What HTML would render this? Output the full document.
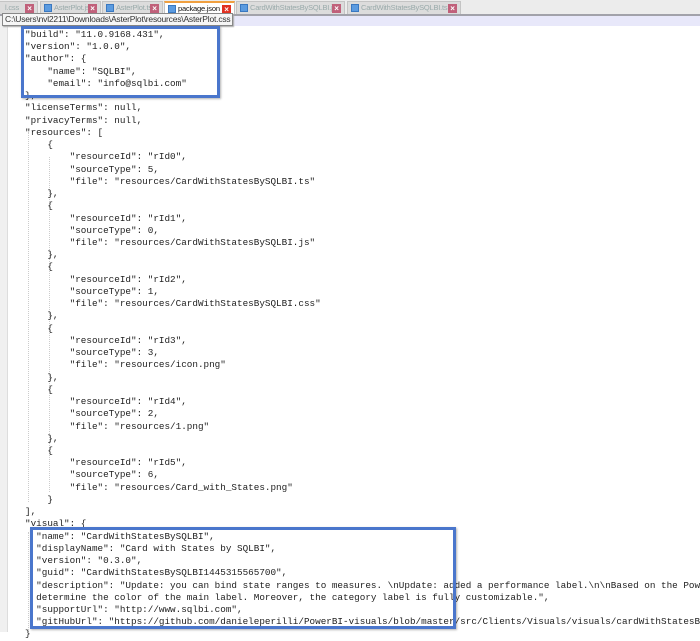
<!DOCTYPE html>
<html><head><style>
body{margin:0;width:700px;height:632px;overflow:hidden;background:#fff;position:relative;font-family:"Liberation Mono",monospace;}
.tabs{position:absolute;left:0;top:0;width:700px;height:14px;background:#ececec;border-bottom:2px solid #a2a2aa;}
.tab{position:absolute;top:1px;height:13px;background:#dcdcdc;border:1px solid #c4c4c4;border-bottom:none;font:7.5px "Liberation Sans",sans-serif;letter-spacing:-0.2px;color:#9aa;line-height:12px;box-sizing:border-box;white-space:nowrap;overflow:hidden;}
.tab .ic{position:absolute;left:3px;top:2px;width:8px;height:8px;background:#5b9be0;border:1px solid #3a78c0;box-sizing:border-box}
.tab .t{position:absolute;left:13px;top:0}
.tab .x{position:absolute;right:3px;top:2px;width:9px;height:9px;background:#c0607a;color:#fff;font-size:8px;line-height:9px;text-align:center;font-weight:bold}
.tab.a{background:#fff;border-top:2px solid #f0a040;color:#111}
.tab.a .x{background:#e03020}
.hl{position:absolute;left:8px;top:16px;width:692px;height:10px;background:#e8e8fa}
.tip{position:absolute;left:2px;top:13px;height:11px;background:#f6f6f6;border:1px solid #888;font:8.5px "Liberation Sans",sans-serif;letter-spacing:-0.2px;color:#333;line-height:11px;padding:0 2px;box-shadow:1px 1px 1px #aaa}
.gut{position:absolute;left:0;top:16px;width:7px;height:616px;background:#f0f0f0;border-right:1px solid #ddd}
.guide{position:absolute;width:0;border-left:1px dotted #ccc}
pre{position:absolute;left:25px;top:29px;width:675px;overflow:hidden;margin:0;font-size:9.3px;line-height:12.23px;color:#222;}
.box{position:absolute;border:3px solid #4a76cc;box-sizing:border-box;box-shadow:1px 1px 2px rgba(0,0,0,.3)}
</style></head><body>
<div class="tabs">
<div class="tab" style="left:-6px;width:44px"><span class="t" style="left:10px">l.css</span><span class="x">×</span></div>
<div class="tab" style="left:40px;width:61px"><span class="ic"></span><span class="t">AsterPlot.js</span><span class="x">×</span></div>
<div class="tab" style="left:102px;width:61px"><span class="ic"></span><span class="t">AsterPlot.ts</span><span class="x">×</span></div>
<div class="tab a" style="left:164px;width:71px"><span class="ic"></span><span class="t">package.json</span><span class="x">×</span></div>
<div class="tab" style="left:236px;width:109px"><span class="ic"></span><span class="t">CardWithStatesBySQLBI.js</span><span class="x">×</span></div>
<div class="tab" style="left:347px;width:114px"><span class="ic"></span><span class="t">CardWithStatesBySQLBI.ts</span><span class="x">×</span></div>
</div>
<div class="hl"></div>
<div class="gut"></div>
<div class="guide" style="left:28px;top:132px;height:370px"></div>
<div class="guide" style="left:49px;top:157px;height:335px"></div>
<div class="guide" style="left:28px;top:532px;height:100px"></div>
<pre>"build": "11.0.9168.431",
"version": "1.0.0",
"author": {
    "name": "SQLBI",
    "email": "info@sqlbi.com"
},
"licenseTerms": null,
"privacyTerms": null,
"resources": [
    {
        "resourceId": "rId0",
        "sourceType": 5,
        "file": "resources/CardWithStatesBySQLBI.ts"
    },
    {
        "resourceId": "rId1",
        "sourceType": 0,
        "file": "resources/CardWithStatesBySQLBI.js"
    },
    {
        "resourceId": "rId2",
        "sourceType": 1,
        "file": "resources/CardWithStatesBySQLBI.css"
    },
    {
        "resourceId": "rId3",
        "sourceType": 3,
        "file": "resources/icon.png"
    },
    {
        "resourceId": "rId4",
        "sourceType": 2,
        "file": "resources/1.png"
    },
    {
        "resourceId": "rId5",
        "sourceType": 6,
        "file": "resources/Card_with_States.png"
    }
],
"visual": {
  "name": "CardWithStatesBySQLBI",
  "displayName": "Card with States by SQLBI",
  "version": "0.3.0",
  "guid": "CardWithStatesBySQLBI1445315565700",
  "description": "Update: you can bind state ranges to measures. \nUpdate: added a performance label.\n\nBased on the Power
  determine the color of the main label. Moreover, the category label is fully customizable.",
  "supportUrl": "http://www.sqlbi.com",
  "gitHubUrl": "https://github.com/danieleperilli/PowerBI-visuals/blob/master/src/Clients/Visuals/visuals/cardWithStatesBy
}</pre>
<div class="tip">C:\Users\nvl2211\Downloads\AsterPlot\resources\AsterPlot.css</div>
<div class="box" style="left:21px;top:26px;width:199px;height:72px"></div>
<div class="box" style="left:30px;top:527px;width:426px;height:102px"></div>
</body></html>
